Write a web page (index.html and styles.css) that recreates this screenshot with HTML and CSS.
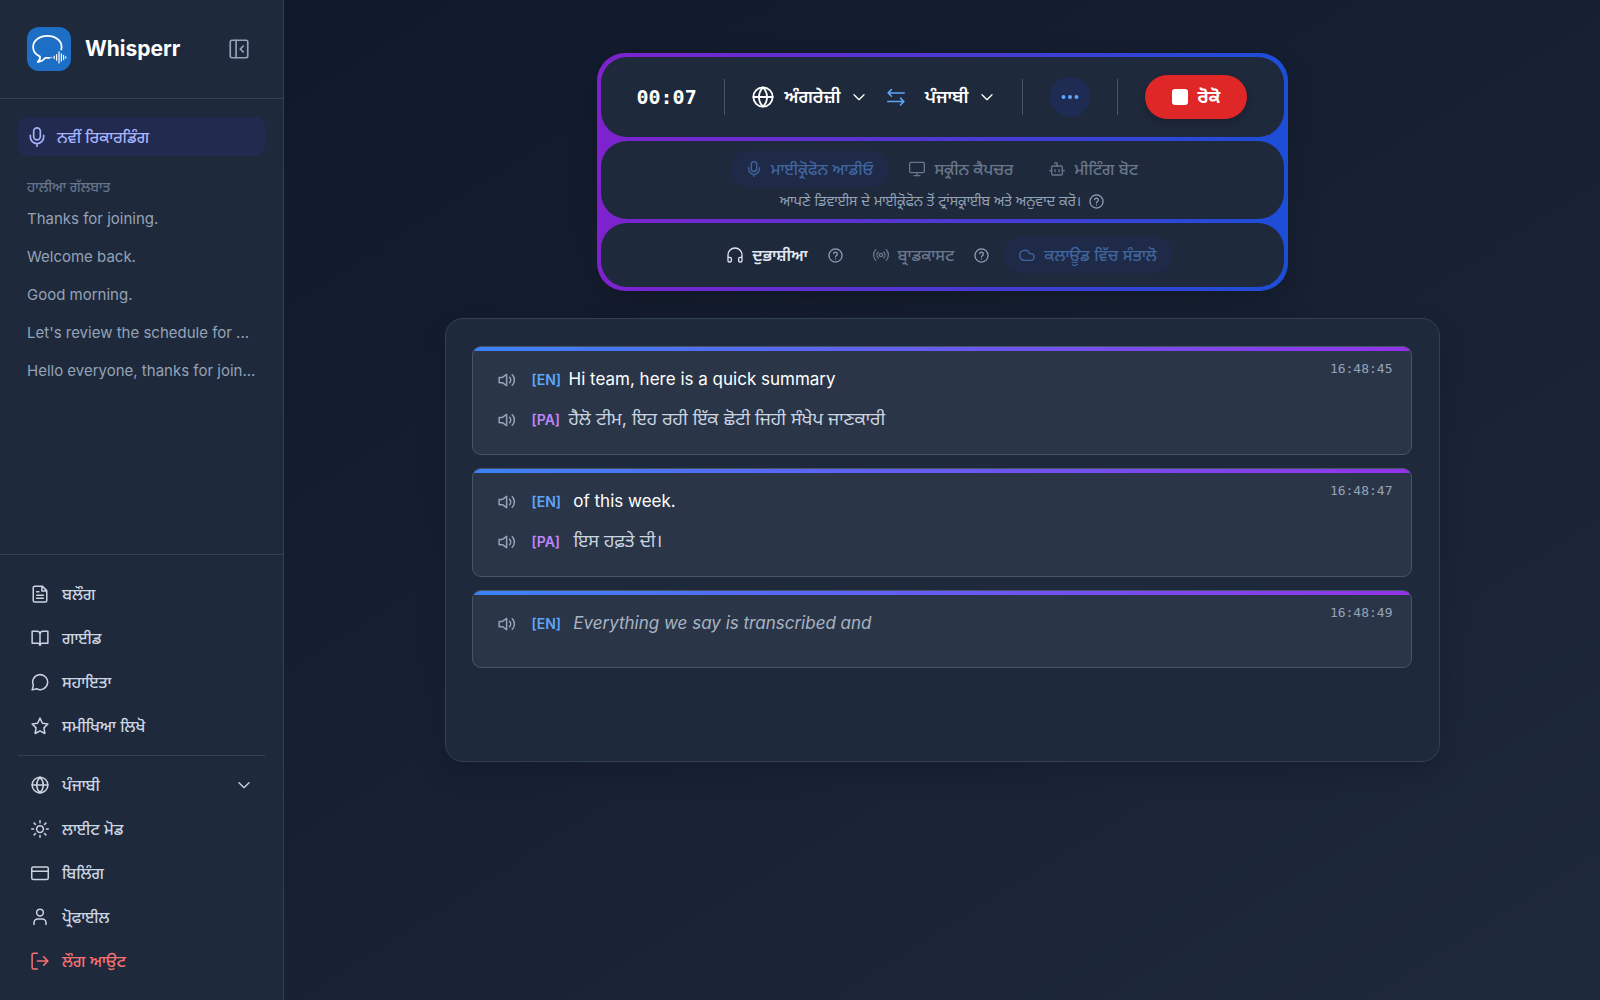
FILE: index.html
```
<!DOCTYPE html>
<html lang="pa">
<head>
	<meta charset="UTF-8">
	<meta name="viewport" content="width=device-width, initial-scale=1">
	<title>Whisperr</title>
	<link rel="stylesheet" href="styles.css">
</head>
<body>
	<!-- shared icons -->
	<svg class="sprite" aria-hidden="true">
		<symbol id="i-mic" viewBox="0 0 24 24"><rect x="8" y="1" width="8" height="14.500" rx="4"/><path d="M20 10v2a8 8 0 0 1-16 0v-2M12 20v3"/></symbol>
		<symbol id="i-globe" viewBox="0 0 24 24"><circle cx="12" cy="12" r="10.500"/><path d="M1.500 12h21M12 1.500a16 16 0 0 1 4.500 10.500A16 16 0 0 1 12 22.500 16 16 0 0 1 7.500 12 16 16 0 0 1 12 1.500z"/></symbol>
		<symbol id="i-chevron" viewBox="0 0 24 24"><path d="m4.500 8.500 7.500 7.500 7.500-7.500"/></symbol>
		<symbol id="i-help" viewBox="0 0 24 24"><circle cx="12" cy="12" r="10.500"/><path d="M9 9a3 3 0 0 1 5.900 1c0 2-2.900 2.600-2.900 4M12 17.500h.01"/></symbol>
		<symbol id="i-volume" viewBox="0 0 24 24"><path d="M11.500 4.500v15l-5.500-4H1.500v-7H6zM15.500 8.500a5 5 0 0 1 0 7M19 5a10 10 0 0 1 0 14"/></symbol>
	</svg>

	<div class="app">
		<aside class="sidebar">
			<header class="brand">
				<svg class="logo" viewBox="0 0 44 44" aria-hidden="true">
					<rect width="44" height="44" rx="12" fill="#1c6fc4"/>
					<g fill="none" stroke="#fff" stroke-linecap="round" stroke-linejoin="round">
						<path stroke-width="1.800" d="M34.200 22.500c.3-.9.400-1.700.400-2.600C34.600 13.600 28.200 8.900 20.400 8.900S6.100 13.600 6.100 19.900c0 4.200 2.800 7.700 6.900 9.700.3 2.200-.5 4-2.200 5.400 3.200-.3 5.600-1.700 7.600-4.200 1.600.2 2.900.2 4.300 0"/>
						<path stroke-width="1.200" d="M24.800 30.300v.2M27.200 29.200v2.400M29.600 27.600v5.600M32 24.800v11.200M34.400 26.800v7.200M36.600 28.300v4.200M38.700 29.800v1.200"/>
					</g>
				</svg>
				<h1 class="brand-name">Whisperr</h1>
				<button class="icon-btn" type="button" aria-label="Collapse sidebar">
					<svg class="icon icon-20" viewBox="0 0 24 24"><rect x="1.500" y="1.500" width="21" height="21" rx="2"/><path d="M8.500 1.500v21M17 8.500 13.500 12l3.500 3.500"/></svg>
				</button>
			</header>

			<div class="history">
				<button class="new-recording" type="button"><svg class="icon icon-20"><use href="#i-mic"/></svg>ਨਵੀਂ ਰਿਕਾਰਡਿੰਗ</button>
				<h2 class="history-title">ਹਾਲੀਆ ਗੱਲਬਾਤ</h2>
				<ul class="history-list">
					<li><a href="#">Thanks for joining.</a></li>
					<li><a href="#">Welcome back.</a></li>
					<li><a href="#">Good morning.</a></li>
					<li><a href="#">Let's review the schedule for ...</a></li>
					<li><a href="#">Hello everyone, thanks for join...</a></li>
				</ul>
			</div>

			<nav class="menu">
				<div class="menu-group">
					<a class="menu-item" href="#"><svg class="icon icon-18" viewBox="0 0 24 24"><path d="M15 1.500H5a2 2 0 0 0-2 2v17a2 2 0 0 0 2 2h14a2 2 0 0 0 2-2v-13zM14.500 2v6H21M7.500 9h3M7.500 13.500h9M7.500 17.500h9"/></svg>ਬਲੌਗ</a>
					<a class="menu-item" href="#"><svg class="icon icon-18" viewBox="0 0 24 24"><path d="M1.500 3H8a4 4 0 0 1 4 4v15a3 3 0 0 0-3-3H1.500zM22.500 3H16a4 4 0 0 0-4 4v15a3 3 0 0 1 3-3h7.500z"/></svg>ਗਾਈਡ</a>
					<a class="menu-item" href="#"><svg class="icon icon-18" viewBox="0 0 24 24"><path d="M3.200 16.500A10 10 0 1 1 7.500 21L1.500 22.500z"/></svg>ਸਹਾਇਤਾ</a>
					<a class="menu-item" href="#"><svg class="icon icon-18" viewBox="0 0 24 24"><path d="m12 1.500 3.200 6.800 7.300 1-5.300 5.200 1.300 7.500-6.500-3.600L5.500 22l1.300-7.500L1.500 9.300l7.300-1z"/></svg>ਸਮੀਖਿਆ ਲਿਖੋ</a>
				</div>
				<div class="menu-group">
					<button class="menu-item" type="button"><svg class="icon icon-18"><use href="#i-globe"/></svg>ਪੰਜਾਬੀ<svg class="icon icon-16 menu-chevron"><use href="#i-chevron"/></svg></button>
					<button class="menu-item" type="button"><svg class="icon icon-18" viewBox="0 0 24 24"><circle cx="12" cy="12" r="4.500"/><path d="M12 1v2.500M12 20.500V23M1 12h2.500M20.500 12H23M4.200 4.200 6 6M18 18l1.800 1.800M4.200 19.800 6 18M18 6l1.800-1.800"/></svg>ਲਾਈਟ ਮੋਡ</button>
					<a class="menu-item" href="#"><svg class="icon icon-18" viewBox="0 0 24 24"><rect x="1" y="4" width="22" height="16.500" rx="2"/><path d="M1 9.500h22"/></svg>ਬਿਲਿੰਗ</a>
					<a class="menu-item" href="#"><svg class="icon icon-18" viewBox="0 0 24 24"><circle cx="12" cy="6" r="4.500"/><path d="M4 22v-2.500a5 5 0 0 1 5-5h6a5 5 0 0 1 5 5V22"/></svg>ਪ੍ਰੋਫਾਈਲ</a>
					<button class="menu-item logout" type="button"><svg class="icon icon-18" viewBox="0 0 24 24"><path d="M8.500 22.500H3.500a2 2 0 0 1-2-2v-17a2 2 0 0 1 2-2h5M17 6.500l5.500 5.500-5.500 5.500M22 12H8.500"/></svg>ਲੌਗ ਆਉਟ</button>
				</div>
			</nav>
		</aside>

		<main class="main">
			<section class="controls">
				<div class="panel panel-top">
					<span class="timer">00:07</span>
					<span class="divider"></span>
					<div class="languages">
						<button class="lang" type="button"><svg class="icon icon-22"><use href="#i-globe"/></svg>ਅੰਗਰੇਜ਼ੀ<svg class="icon icon-16"><use href="#i-chevron"/></svg></button>
						<button class="swap" type="button" aria-label="Swap languages"><svg class="icon icon-18" viewBox="0 0 24 24"><path d="M23 6.500H1.500M6 2 1.500 6.500 6 11M1 18h21.500M18 13.500l4.500 4.500-4.500 4.500"/></svg></button>
						<button class="lang" type="button">ਪੰਜਾਬੀ<svg class="icon icon-16"><use href="#i-chevron"/></svg></button>
					</div>
					<span class="divider"></span>
					<button class="more" type="button" aria-label="More options"><svg class="icon-18" viewBox="0 0 18 18" fill="currentColor"><circle cx="2.500" cy="9" r="2"/><circle cx="9" cy="9" r="2"/><circle cx="15.500" cy="9" r="2"/></svg></button>
					<span class="divider"></span>
					<button class="stop" type="button"><span class="stop-square"></span>ਰੋਕੋ</button>
				</div>

				<div class="panel panel-source">
					<div class="sources">
						<button class="pill active" type="button"><svg class="icon icon-16"><use href="#i-mic"/></svg>ਮਾਈਕ੍ਰੋਫੋਨ ਆਡੀਓ</button>
						<button class="pill" type="button"><svg class="icon icon-16" viewBox="0 0 24 24"><rect x="1" y="2" width="22" height="15.500" rx="2"/><path d="M12 17.500V22M7.500 22h9"/></svg>ਸਕ੍ਰੀਨ ਕੈਪਚਰ</button>
						<button class="pill" type="button"><svg class="icon icon-16" viewBox="0 0 24 24"><path d="M12 7.500V3H8.500M1 14.500h3M20 14.500h3M9 13v3M15 13v3"/><rect x="4" y="7.500" width="16" height="13.500" rx="2"/></svg>ਮੀਟਿੰਗ ਬੋਟ</button>
					</div>
					<p class="source-note">ਆਪਣੇ ਡਿਵਾਈਸ ਦੇ ਮਾਈਕ੍ਰੋਫੋਨ ਤੋਂ ਟ੍ਰਾਂਸਕ੍ਰਾਈਬ ਅਤੇ ਅਨੁਵਾਦ ਕਰੋ।<button class="help" type="button" aria-label="Help"><svg class="icon icon-15"><use href="#i-help"/></svg></button></p>
				</div>

				<div class="panel panel-mode">
					<button class="pill selected" type="button"><svg class="icon icon-16" viewBox="0 0 24 24"><path d="M1.500 18v-6a10.500 10.500 0 0 1 21 0v6M1.500 15.500h3a2 2 0 0 1 2 2v3a2 2 0 0 1-2 2h-1a2 2 0 0 1-2-2zM22.500 15.500h-3a2 2 0 0 0-2 2v3a2 2 0 0 0 2 2h1a2 2 0 0 0 2-2z"/></svg>ਦੁਭਾਸ਼ੀਆ</button>
					<button class="help" type="button" aria-label="Help"><svg class="icon icon-15"><use href="#i-help"/></svg></button>
					<button class="pill" type="button"><svg class="icon icon-16" viewBox="0 0 24 24"><circle cx="12" cy="12" r="2.500"/><path d="M7.800 7.500a6.500 6.500 0 0 0 0 9M16.200 7.500a6.500 6.500 0 0 1 0 9M4 4a12 12 0 0 0 0 16M20 4a12 12 0 0 1 0 16"/></svg>ਬ੍ਰਾਡਕਾਸਟ</button>
					<button class="help" type="button" aria-label="Help"><svg class="icon icon-15"><use href="#i-help"/></svg></button>
					<button class="pill active" type="button"><svg class="icon icon-16" viewBox="0 0 24 24"><path d="M17.500 20H8.500a7.500 7.500 0 1 1 7.200-10h1.800a5 5 0 1 1 0 10z"/></svg>ਕਲਾਊਡ ਵਿੱਚ ਸੰਭਾਲੋ</button>
				</div>
			</section>

			<section class="transcript">
				<article class="entry">
					<time class="entry-time">16:48:45</time>
					<div class="line"><button class="speak" type="button" aria-label="Play"><svg class="icon icon-18"><use href="#i-volume"/></svg></button><span class="tag tag-en">[EN]</span><p class="text" lang="en">Hi team, here is a quick summary</p></div>
					<div class="line"><button class="speak" type="button" aria-label="Play"><svg class="icon icon-18"><use href="#i-volume"/></svg></button><span class="tag tag-pa">[PA]</span><p class="text translated">ਹੈਲੋ ਟੀਮ, ਇਹ ਰਹੀ ਇੱਕ ਛੋਟੀ ਜਿਹੀ ਸੰਖੇਪ ਜਾਣਕਾਰੀ</p></div>
				</article>
				<article class="entry">
					<time class="entry-time">16:48:47</time>
					<div class="line"><button class="speak" type="button" aria-label="Play"><svg class="icon icon-18"><use href="#i-volume"/></svg></button><span class="tag tag-en">[EN]</span><p class="text" lang="en"> of this week.</p></div>
					<div class="line"><button class="speak" type="button" aria-label="Play"><svg class="icon icon-18"><use href="#i-volume"/></svg></button><span class="tag tag-pa">[PA]</span><p class="text translated"> ਇਸ ਹਫ਼ਤੇ ਦੀ।</p></div>
				</article>
				<article class="entry">
					<time class="entry-time">16:48:49</time>
					<div class="line"><button class="speak" type="button" aria-label="Play"><svg class="icon icon-18"><use href="#i-volume"/></svg></button><span class="tag tag-en">[EN]</span><p class="text pending" lang="en"> Everything we say is transcribed and</p></div>
				</article>
			</section>
		</main>
	</div>
</body>
</html>
```
FILE: styles.css
```
*{
	box-sizing: border-box;
}
body{
	margin: 0;
	background: #0f172a;
	color: #fff;
	font-family: Inter, "Noto Sans", "Noto Sans Gurmukhi", sans-serif;
	font-size: 16px;
	line-height: 24px;
}
h1,h2,p,ul{
	margin: 0;
	padding: 0;
}
ul{
	list-style: none;
}
a{
	color: inherit;
	text-decoration: none;
}
button{
	padding: 0;
	border: 0;
	background: none;
	color: inherit;
	font: inherit;
	cursor: pointer;
}
.sprite{
	position: absolute;
	width: 0;
	height: 0;
}
.icon{
	flex: none;
	fill: none;
	stroke: currentColor;
	stroke-width: 2;
	stroke-linecap: round;
	stroke-linejoin: round;
}
.icon-15{
	width: 15px;
	height: 15px;
}
.icon-16{
	width: 16px;
	height: 16px;
}
.icon-18{
	width: 18px;
	height: 18px;
}
.icon-20{
	width: 20px;
	height: 20px;
}
.icon-22{
	width: 22px;
	height: 22px;
}
.app{
	display: flex;
	min-height: 100vh;
	background: linear-gradient(to bottom right, #0f172a, #1e293b);
}

/* sidebar */
.sidebar{
	display: flex;
	flex: none;
	flex-direction: column;
	width: 284px;
	border-right: 1px solid #334155;
	background: #1e293b;
}
.brand{
	display: flex;
	align-items: center;
	padding: 27px 34px 27px 27px;
	border-bottom: 1px solid #334155;
}
.logo{
	width: 44px;
	height: 44px;
}
.brand-name{
	margin-left: 14px;
	font-size: 21px;
	line-height: 28px;
	font-weight: 700;
}
.icon-btn{
	display: flex;
	margin-left: auto;
	color: #94a3b8;
}
.history{
	flex: 1;
	padding: 18px;
}
.new-recording{
	display: flex;
	align-items: center;
	gap: 10px;
	width: 100%;
	height: 39px;
	padding: 0 9px;
	border-radius: 9px;
	background: #232a4f;
	color: #a5b4fc;
	font-weight: 500;
}
.history-title{
	padding: 22px 9px 4px;
	color: #64748b;
	font-size: 14px;
	line-height: 18px;
	font-weight: 500;
}
.history-list a{
	display: block;
	padding: 7px 9px;
	overflow: hidden;
	color: #94a3b8;
	font-size: 15px;
	white-space: nowrap;
}
.menu{
	padding: 17px 18px;
	border-top: 1px solid #334155;
	color: #cbd5e1;
}
.menu-group + .menu-group{
	margin-top: 7px;
	padding-top: 7px;
	border-top: 1px solid #334155;
}
.menu-item{
	display: flex;
	align-items: center;
	gap: 13px;
	width: 100%;
	height: 44px;
	padding: 0 13px;
	font-weight: 500;
}
.menu-chevron{
	margin-left: auto;
}
.logout{
	color: #f87171;
}

/* recording controls */
.main{
	display: flex;
	flex: 1;
	flex-direction: column;
	align-items: center;
	gap: 27px;
	min-width: 0;
	padding: 53px 36px;
}
.controls{
	display: flex;
	flex-direction: column;
	gap: 4px;
	width: 100%;
	max-width: 691px;
	padding: 4px;
	border-radius: 28px;
	background: linear-gradient(to right, #7e22ce, #1d4ed8);
	box-shadow: 0 12px 28px rgba(0, 0, 0, .2);
}
.panel{
	display: flex;
	align-items: center;
	justify-content: center;
	border-radius: 26px;
	background: #1e293b;
}
.panel-top{
	justify-content: space-between;
	padding: 18px 36px;
}
.timer{
	font: 700 20px/28px "DejaVu Sans Mono", monospace;
}
.divider{
	width: 1px;
	height: 36px;
	background: #475569;
}
.languages{
	display: flex;
	align-items: center;
	gap: 20px;
}
.lang{
	display: flex;
	align-items: center;
	gap: 10px;
	font-size: 18px;
	font-weight: 600;
}
.swap{
	display: flex;
	color: #60a5fa;
}
.more{
	display: flex;
	align-items: center;
	justify-content: center;
	width: 40px;
	height: 40px;
	border-radius: 50%;
	background: #1e2c53;
	color: #60a5fa;
}
.stop{
	display: flex;
	align-items: center;
	gap: 9px;
	height: 44px;
	padding: 0 27px;
	border-radius: 22px;
	background: #e02727;
	box-shadow: 0 4px 10px rgba(0, 0, 0, .2);
	font-size: 18px;
	font-weight: 700;
}
.stop-square{
	width: 16px;
	height: 16px;
	border-radius: 3px;
	background: #fff;
}
.panel-source{
	flex-direction: column;
	gap: 2px;
	padding: 10px 18px 6px;
}
.sources{
	display: flex;
	gap: 4px;
}
.pill{
	display: flex;
	align-items: center;
	gap: 9px;
	height: 36px;
	padding: 0 16px;
	border-radius: 18px;
	color: #69778c;
	font-weight: 500;
	white-space: nowrap;
}
.pill.active{
	background: #1e2a47;
	color: #40659f;
}
.pill.selected{
	color: #e2e8f0;
	font-weight: 600;
}
.source-note{
	display: flex;
	align-items: center;
	gap: 8px;
	color: #94a3b8;
	font-size: 14px;
	line-height: 24px;
}
.help{
	display: flex;
	color: #94a3b8;
}
.panel-mode{
	padding: 14px 18px;
}
.panel-mode .help{
	margin: 0 14px 0 4px;
}

/* transcript */
.transcript{
	display: flex;
	flex-direction: column;
	gap: 13px;
	width: 100%;
	max-width: 995px;
	min-height: 444px;
	padding: 27px 27px 27px 26px;
	border: 1px solid #334155;
	border-radius: 18px;
	background: #1e293b;
	box-shadow: 0 12px 28px rgba(0, 0, 0, .15);
}
.entry{
	position: relative;
	min-height: 78px;
	padding: 20px 25px 21px;
	overflow: hidden;
	border: 1px solid #475569;
	border-radius: 9px;
	background: #2a3648;
}
.entry::before{
	content: "";
	position: absolute;
	top: 0;
	left: 0;
	right: 0;
	height: 4px;
	background: linear-gradient(to right, #3b82f6, #9333ea);
}
.entry-time{
	position: absolute;
	top: 12px;
	right: 18px;
	color: #94a3b8;
	font: 13px/20px "DejaVu Sans Mono", monospace;
}
.line{
	display: flex;
	align-items: center;
	min-height: 26px;
}
.line + .line{
	margin-top: 14px;
}
.speak{
	display: flex;
	color: #94a3b8;
}
.tag{
	width: 37px;
	margin-left: 16px;
	font-size: 14px;
	font-weight: 600;
}
.tag-en{
	color: #60a5fa;
}
.tag-pa{
	color: #c084fc;
}
.text{
	padding-bottom: 2px;
	font-size: 17px;
	line-height: 24px;
	white-space: pre-wrap;
}
.translated{
	color: #cbd5e1;
	font-size: 18px;
}
.pending{
	color: #a9b3c2;
	font-style: italic;
}
```
